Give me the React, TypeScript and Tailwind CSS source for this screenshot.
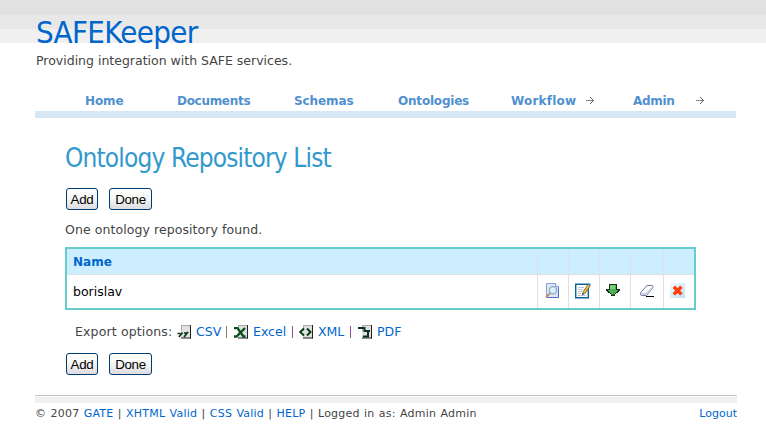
import React from "react";

const nav = [
  { label: "Home", cell: "w-[92px]", track: "tracking-[-0.1px]" },
  { label: "Documents", cell: "w-[117px]", track: "tracking-[-0.3px]" },
  { label: "Schemas", cell: "w-[104px]", track: "tracking-[-0.1px]" },
  { label: "Ontologies", cell: "w-[113px]", track: "tracking-[-0.2px]" },
];

function Arrow() {
  return (
    <svg className="-mt-px" width="8" height="7" viewBox="0 0 8 7" shapeRendering="crispEdges">
      <path d="M0 3h8v1H0z" fill="#858585" />
      <path d="M4 0h1v1H4zM5 1h1v1H5zM6 2h1v1H6zM6 4h1v1H6zM5 5h1v1H5zM4 6h1v1H4zM7 3h1v1H7z" fill="#666" />
    </svg>
  );
}

function Buttons() {
  const cls =
    "h-[22px] rounded-[3px] border border-[#003c74] bg-linear-to-b from-white via-[#f5f5f3] to-[#dcdce2] font-['Liberation_Sans',Arial,sans-serif] text-[13.33px] leading-[19px] text-black";
  return (
    <div className="flex gap-[11px] pl-px">
      <button className={cls + " w-8"}><span className="-mx-1 tracking-[-0.3px]">Add</span></button>
      <button className={cls + " w-[43px]"}><span className="-mx-1 tracking-[-0.3px]">Done</span></button>
    </div>
  );
}

function ViewIcon() {
  return (
    <svg className="-ml-0.5 -mt-0.5" width="15" height="16" viewBox="0 0 15 16">
      <path d="M1.5.5h9l3 3v11h-12z" fill="#dce6fb" stroke="#8b9fdc" />
      <path d="M10.5.5v3h3" fill="#fff" stroke="#8b9fdc" />
      <path d="M13.5 4v10.5H2" fill="none" stroke="#5a6cc0" />
      <circle cx="8" cy="7.3" r="3.6" fill="#d2f1fa" stroke="#98a6c4" strokeWidth="1.3" />
      <path d="M6.3 7.2q.2-1.6 1.8-1.9" stroke="#fff" fill="none" />
      <path d="M5.2 10.2L1 14.2" stroke="#b78c58" strokeWidth="1.8" />
    </svg>
  );
}

function EditIcon() {
  return (
    <svg className="-ml-[3px] -mt-0.5" width="16" height="16" viewBox="0 0 16 16">
      <path d="M.7 1.2h12.6v13.6H.7z" fill="#fff" stroke="#0f6391" strokeWidth="1.4" />
      <path d="M3 4.5h6M3 6.5h5M3 8.5h4M3 10.5h3M3 12.5h8" stroke="#bcc9d0" />
      <path d="M14.3 1.8L8.8 10" stroke="#6b5b33" strokeWidth="3.2" />
      <path d="M14 2.2L8.8 10" stroke="#f2b544" strokeWidth="2" />
      <path d="M14 0l2 1.3-1 1.5-2-1.3z" fill="#4e93d4" />
      <path d="M7.4 9.5l2.2 1.5-2.6 1.3z" fill="#333" />
    </svg>
  );
}

function DownIcon() {
  return (
    <svg className="-ml-[5px] -mt-[3px]" width="14" height="12" viewBox="0 0 14 12" shapeRendering="crispEdges">
      <path d="M3 0h8v5h3v2h-1v1h-1v1h-2v1H9v2H5v-2H4V9H2V8H1V7H0V5h3z" fill="#153018" />
      <path d="M4 1h6v5h2v1h-1v1h-1v1H9v1H5V9H4V8H3V7H2V6h2z" fill="#4db052" />
      <path d="M4 1h5v4H4z" fill="#79cf78" />
      <path d="M5 10h4v1H5z" fill="#2c7030" />
    </svg>
  );
}

function EraserIcon() {
  return (
    <svg className="-mt-0.5" width="16" height="14" viewBox="0 0 16 14">
      <path d="M1.5 9L7.2 2.2Q8 1.4 9 1.5h4Q14.7 1.8 13.8 3.8L8 11Q7.2 11.6 6 11.5H3Q.5 11.2 1.5 9z" fill="#fff" stroke="#7074a0" />
      <path d="M2 8.7h5L13.5 2.5V4L7.5 11H3z" fill="#cfd0e6" />
      <path d="M7 12.5h8" stroke="#000" />
    </svg>
  );
}

function DeleteIcon() {
  return (
    <svg className="-ml-[3px] -mt-[3px]" width="15" height="15" viewBox="0 0 15 15">
      <defs>
        <linearGradient id="tile" x1="0" y1="0" x2="1" y2="1">
          <stop stopColor="#f2fafe" />
          <stop offset="1" stopColor="#bfe0f3" />
        </linearGradient>
      </defs>
      <path d="M0 0h15v15H0z" fill="url(#tile)" />
      <path d="M3.8 3.8l7.6 7.6M11.4 3.8l-7.6 7.6" stroke="#ff3c0a" strokeWidth="3.4" />
    </svg>
  );
}

function FileIcon({ kind }: { kind: string }) {
  return (
    <svg className="-mt-px" width="15" height="14" viewBox="0 0 15 14">
      <path d="M4 1h9v12H4z" fill="#e0e0e0" />
      <path d="M4 .5h9.5M4.5 1v5" stroke="#aaa" fill="none" />
      <path d="M13.5 0v13.5M4 13h10" stroke="#222" fill="none" />
      {kind === "CSV" && <path d="M2 12L5.5 7.5M7 12L11 7M0.5 8.5h3M7 8h3" stroke="#08350f" strokeWidth="1.7" fill="none" />}
      {kind === "Excel" && <path d="M0 3.2h3.5l6 8.3h2M11 3L2.5 11.5H0" stroke="#06501c" strokeWidth="2.3" fill="none" />}
      {kind === "XML" && <path d="M5 3.5L1.2 7 5 10.5M8 3.5L11.5 7 8 10.5" stroke="#063f16" strokeWidth="2" fill="none" />}
      {kind === "PDF" && <path d="M0 3h6.5v3H12M10 6v5.5H5" stroke="#0c3320" strokeWidth="2" fill="none" />}
    </svg>
  );
}

const icons = [
  { w: "w-[31px]", el: <ViewIcon /> },
  { w: "w-[31px]", el: <EditIcon /> },
  { w: "w-[31px]", el: <DownIcon /> },
  { w: "w-[33px]", el: <EraserIcon /> },
  { w: "w-[31px]", el: <DeleteIcon /> },
];

const exportsList = [
  { k: "CSV", w: "w-[57px]", bar: "ml-[5px] bg-[#7d8a50]" },
  { k: "Excel", w: "w-[65px]", bar: "ml-[6px] bg-[#984898]" },
  { k: "XML", w: "w-[59px]", bar: "ml-[6px] bg-[#984898]" },
  { k: "PDF", w: "w-[50px]", bar: "hidden" },
];

export default function App() {
  return (
    <div className="h-[435px] w-[766px] overflow-hidden bg-white font-['DejaVu_Sans',Verdana,sans-serif] text-[13px] text-[#444] whitespace-nowrap">
      <header className="h-[91px] bg-[linear-gradient(#e1e1e1_0_15px,#e8e8e8_15px_29px,#f0f0f0_29px_43px,#fff_43px)] pl-9 pt-[13px]">
        <h1 className="h-[38px] font-['DejaVu_Sans_Condensed','DejaVu_Sans',sans-serif] [font-stretch:condensed] text-[31px] leading-[38px] tracking-[-0.7px] text-[#0066cc]"><span>SAFEKeeper</span></h1>
        <p className="h-[18px] text-[12.5px] leading-[20px]"><span>Providing integration with SAFE services.</span></p>
      </header>
      <nav className="ml-[35px] flex h-[27px] w-[701px] border-b-[7px] border-[#d6e8f5] pl-[50px] text-[12px] leading-5 font-bold text-[#5090d0]">
        {nav.map((n) => <div key={n.label} className={n.cell}><span className={n.track}>{n.label}</span></div>)}
        <div className="flex w-[122px] items-center"><span className="w-[75px] tracking-[0.2px]">Workflow</span><Arrow /></div>
        <div className="flex items-center"><span className="w-[63px] tracking-[-0.3px]">Admin</span><Arrow /></div>
      </nav>
      <main className="h-[277px] pl-[65px] pt-[22px]">
        <h2 className="h-[36px] font-['DejaVu_Sans_Condensed','DejaVu_Sans',sans-serif] [font-stretch:condensed] text-[26px] leading-[36px] tracking-[-0.85px] text-[#3399cc]"><span>Ontology Repository List</span></h2>
        <div className="mt-3"><Buttons /></div>
        <p className="mt-[9px] h-[21px] text-[12.5px] leading-[21px] tracking-[0.08px]"><span>One ontology repository found.</span></p>
        <div className="mt-[7px] h-[63px] w-[631px] border-2 border-[#66cccc]">
          <div className="flex h-[26px] border-b border-[#e0e0e0] bg-[#cceeff]">
            <div className="flex-1 pl-1.5 text-[12px] leading-[26px] font-bold text-[#0066cc]"><span>Name</span></div>
            {icons.map((c, i) => <div key={i} className={"border-l border-[#dfe3e8] " + c.w} />)}
          </div>
          <div className="flex h-[33px]">
            <div className="flex-1 pl-1.5 text-[12.5px] leading-[33px] text-black"><span>borislav</span></div>
            {icons.map((c, i) => <div key={i} className={"flex items-center justify-center border-l border-[#e0e0e0] " + c.w}>{c.el}</div>)}
          </div>
        </div>
        <div className="mt-[11px] flex h-[22px] items-center pl-2.5 text-[12.5px]">
          <span className="w-[102px] tracking-[0.15px]">Export options:</span>
          {exportsList.map((e) => (
            <div key={e.k} className={"flex items-center " + e.w}>
              <FileIcon kind={e.k} />
              <span className="ml-1 text-[#0066cc]">{e.k}</span>
              <i className={"h-3 w-px shrink-0 " + e.bar} />
            </div>
          ))}
        </div>
        <div className="mt-2.5"><Buttons /></div>
      </main>
      <footer className="ml-[35px] w-[702px] border-t border-[#c5c5c5] pt-px">
        <div className="h-1.5 bg-[#f0f0f0]" />
        <div className="flex justify-between pt-0.5 text-[11px] leading-[18px]">
          <span className="tracking-[0.22px] [word-spacing:0.6px]">© 2007 <a className="text-[#0066cc]">GATE</a> | <a className="text-[#0066cc]">XHTML Valid</a> | <a className="text-[#0066cc]">CSS Valid</a> | <a className="text-[#0066cc]">HELP</a> | Logged in as: Admin Admin</span>
          <a className="text-[#0066cc]">Logout</a>
        </div>
      </footer>
    </div>
  );
}
